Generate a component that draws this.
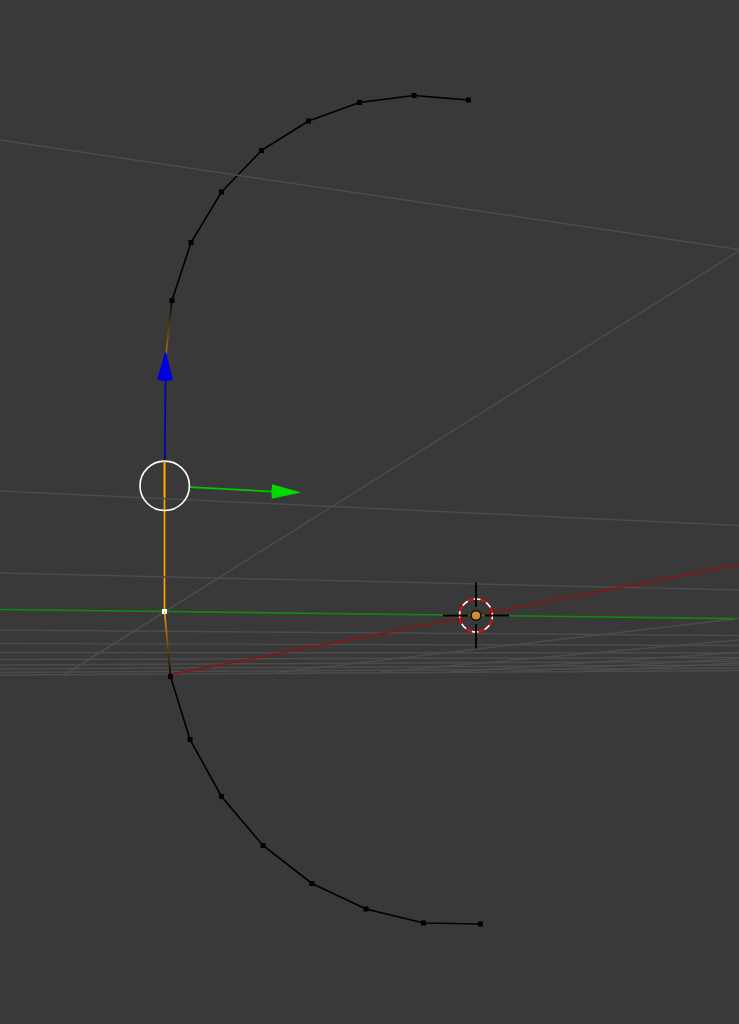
type Point = [number, number];

const upperArc: Point[] = [
  [468.5, 100], [414, 95.5], [359.5, 102.5], [308.5, 121], [261.5, 150.5],
  [221.5, 192], [191, 242.5], [172, 300.5],
];

const lowerArc: Point[] = [
  [170.5, 676.5], [190, 739.5], [221.5, 796.5], [263, 845.5],
  [312, 883.5], [366, 909], [423.5, 923], [480.5, 924],
];

// Each entry is x1, y1, x2, y2.
const floorLines: number[][] = [
  [0, 140, 739, 249.5],
  [0, 491, 739, 525.5],
  [0, 573, 739, 590],
  [0, 630, 739, 635.5],
  [0, 643.5, 739, 645.5],
  [0, 652.5, 739, 653],
  [0, 659.5, 739, 657.5],
  [0, 665, 739, 661.5],
  [0, 669, 739, 665],
  [0, 672.5, 739, 668],
  [0, 675, 739, 670.5],
  [739, 251, 64, 675],
  [739, 618.5, 276, 672.5],
  [739, 640, 380, 672],
  [739, 652.5, 450, 672],
  [739, 658.5, 510, 672],
  [739, 663, 570, 672],
];

const toPoints = (points: Point[]) => points.map((p) => p.join(",")).join(" ");

function Arc({ points }: { points: Point[] }) {
  return (
    <g>
      <polyline points={toPoints(points)} fill="none" stroke="#000" strokeWidth="1.6" />
      {points.map(([x, y]) => (
        <rect key={x} x={x - 2.5} y={y - 2.5} width="5" height="5" fill="#000" />
      ))}
    </g>
  );
}

function FloorGrid() {
  return (
    <g stroke="#4c4c4c" strokeWidth="1.5">
      {floorLines.map(([x1, y1, x2, y2]) => (
        <line key={`${x1}-${y1}`} x1={x1} y1={y1} x2={x2} y2={y2} />
      ))}
    </g>
  );
}

function MoveGizmo() {
  return (
    <g>
      <line x1="165.5" y1="380" x2="164.8" y2="461" stroke="#0000b4" strokeWidth="1.8" />
      <path d="M165.5 350.5L157.2 379.5Q165 382.5 173 379.5Z" fill="#0000dc" />
      <line x1="190" y1="487.2" x2="273" y2="491.6" stroke="#00c800" strokeWidth="1.8" />
      <path d="M301 492.5L272.2 484.2Q270.8 491 271.8 498.8Z" fill="#00dc00" />
      <circle cx="164.7" cy="485.8" r="24.7" fill="none" stroke="#fff" strokeWidth="1.6" />
    </g>
  );
}

function Cursor3D() {
  return (
    <g>
      <circle cx="476" cy="615.5" r="16.5" fill="none" stroke="#f00" strokeWidth="1.6" />
      <circle
        cx="476"
        cy="615.5"
        r="16.5"
        fill="none"
        stroke="#fff"
        strokeWidth="1.6"
        strokeDasharray="6.48 6.48"
        transform="rotate(-9 476 615.5)"
      />
      <path
        d="M476 582.5V607M476 624V648.5M443 615.5H468M485 615.5H509"
        stroke="#000"
        strokeWidth="1.8"
      />
      <circle cx="476" cy="615.5" r="4.8" fill="#d18e3b" stroke="#111" strokeWidth="1.4" />
    </g>
  );
}

export default function App() {
  return (
    <main className="min-h-screen w-full bg-[#393939]">
      <svg viewBox="0 0 739 1024" className="block h-auto w-full" role="img" aria-label="3D viewport">
        <defs>
          <linearGradient id="fadeUp" gradientUnits="userSpaceOnUse" x1="172" y1="300" x2="165" y2="362">
            <stop offset="0" stopColor="#000" />
            <stop offset="1" stopColor="#cf8500" />
          </linearGradient>
          <linearGradient id="fadeDown" gradientUnits="userSpaceOnUse" x1="164.5" y1="611" x2="170.5" y2="676">
            <stop offset="0" stopColor="#ffa000" />
            <stop offset="1" stopColor="#000" />
          </linearGradient>
        </defs>
        <line x1="172" y1="300" x2="166" y2="354" stroke="url(#fadeUp)" strokeWidth="1.7" />
        <line x1="164.5" y1="461" x2="164.5" y2="611" stroke="#ffa000" strokeWidth="1.7" />
        <Arc points={upperArc} />
        <FloorGrid />
        <line x1="0" y1="609.5" x2="734" y2="618.6" stroke="#138713" strokeWidth="1.6" />
        <line x1="173" y1="674" x2="739" y2="564.5" stroke="#8d1212" strokeWidth="1.4" />
        <line x1="164.5" y1="611" x2="170.5" y2="676" stroke="url(#fadeDown)" strokeWidth="1.7" />
        <Arc points={lowerArc} />
        <rect x="162" y="609" width="5" height="5" fill="#fff" />
        <path d="M164.5 611L165 614" stroke="#ffa000" />
        <MoveGizmo />
        <line x1="164.5" y1="461" x2="164.5" y2="497" stroke="#ffa000" strokeWidth="1.7" />
        <Cursor3D />
      </svg>
    </main>
  );
}
